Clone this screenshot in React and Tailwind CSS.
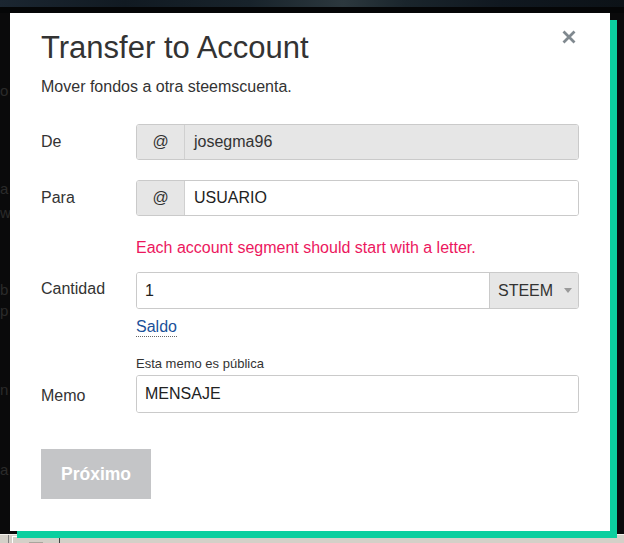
import React from "react";

function Group({ h, children }) {
  return (
    <div className={`flex w-[443px] ${h} rounded-[3px] border border-[#cacaca] overflow-hidden`}>
      {children}
    </div>
  );
}

function Row({ label, labelClass = "", children }) {
  return (
    <div className="flex items-center">
      <div className={`w-[95px] text-[16px] leading-none text-[#333] ${labelClass}`}>{label}</div>
      {children}
    </div>
  );
}

export default function App() {
  return (
    <div className="w-[624px] h-[543px] overflow-hidden bg-[#0a0a0b] flex flex-col font-['Liberation_Sans',Arial,sans-serif]">
      <div className="h-[7px] shrink-0 bg-[linear-gradient(90deg,#1b2631_0%,#111a22_20%,#18232b_40%,#2c383e_55%,#1a252c_65%,#101820_80%,#0c1217_100%)]" />
      <div className="h-[6px] shrink-0 bg-[#050607]" />
      <div className="flex h-[521px] shrink-0">
        <div className="w-[10px] shrink-0 flex flex-col items-start text-[15px] leading-none text-[#2a2a2a] whitespace-nowrap">
          <div className="mt-[70px]">o</div>
          <div className="mt-[83px]">a</div>
          <div className="mt-[9px]">w</div>
          <div className="mt-[62px]">b</div>
          <div className="mt-[6px]">p</div>
          <div className="mt-[64px]">n</div>
          <div className="mt-[65px]">a</div>
        </div>
        <div className="relative w-[600px] h-[518px] shrink-0 bg-white shadow-[7px_7px_0_#0bcf9f] pl-[31px] pr-[31px] pt-[19px] flex flex-col">
          <button className="absolute right-[34px] top-[17px] w-[14px] h-[14px]">
            <svg viewBox="0 0 14 14" width="14" height="14">
              <path d="M1.5 1.5 L12.5 12.5 M12.5 1.5 L1.5 12.5" stroke="#80898f" strokeWidth="2.8" />
            </svg>
          </button>
          <h1 className="text-[31px] leading-none text-[#333] h-[31px]">Transfer to Account</h1>
          <p className="mt-[16px] text-[16px] leading-none text-[#333] h-[16px]">Mover fondos a otra steemscuenta.</p>

          <div className="mt-[29px]">
            <Row label="De">
              <Group h="h-[36px]">
                <span className="w-[48px] flex items-center justify-center bg-[#e6e6e6] border-r border-[#d0d0d0] text-[16px] text-[#333]">@</span>
                <div className="flex-1 flex items-center pl-[9px] bg-[#e6e6e6] text-[16px] text-[#333]">josegma96</div>
              </Group>
            </Row>
          </div>

          <div className="mt-[20px]">
            <Row label="Para">
              <Group h="h-[36px]">
                <span className="w-[48px] flex items-center justify-center bg-[#e6e6e6] border-r border-[#d0d0d0] text-[16px] text-[#333]">@</span>
                <div className="flex-1 flex items-center pl-[9px] bg-white text-[16px] text-[#222]">USUARIO</div>
              </Group>
            </Row>
          </div>

          <p className="mt-[24px] ml-[95px] h-[16px] text-[16px] leading-none text-[#ec175e]">
            Each account segment should start with a letter.
          </p>

          <div className="mt-[16px]">
            <Row label="Cantidad" labelClass="mb-[4px]">
              <Group h="h-[37px]">
                <div className="flex-1 flex items-center pl-2 bg-white text-[16px] text-[#222]">1</div>
                <div className="w-[89px] flex items-center pl-[8px] bg-[#e6e6e6] border-l border-[#cacaca] text-[16px] text-[#333]">
                  <span>STEEM</span>
                  <svg className="ml-[11px]" width="8" height="5" viewBox="0 0 8 5">
                    <path d="M0 0 L8 0 L4 5 Z" fill="#9a9a9a" />
                  </svg>
                </div>
              </Group>
            </Row>
          </div>

          <div className="mt-[10px] ml-[95px] h-[16px] text-[16px] leading-none">
            <span className="text-[#1a5099] border-b border-dotted border-[#666] pb-[1px]">Saldo</span>
          </div>

          <p className="mt-[22px] ml-[95px] h-[13px] text-[13px] leading-none text-[#333]">Esta memo es pública</p>

          <div className="mt-[5px]">
            <Row label="Memo" labelClass="mt-[3px]">
              <Group h="h-[38px]">
                <div className="flex-1 flex items-center pl-2 bg-white text-[16px] text-[#222]">MENSAJE</div>
              </Group>
            </Row>
          </div>

          <button className="mt-[36px] w-[110px] h-[50px] bg-[#c4c5c7] text-white font-bold text-[17.5px] flex items-center justify-center">
            Próximo
          </button>
        </div>
      </div>
      <div className="h-[9px] shrink-0 bg-[#d4d0c8] border-t border-[#f4f2ee] flex">
        <div className="ml-[8px] w-[1px] bg-[#808080]" />
        <div className="ml-[3px] mt-[1px] w-[48px] border-t border-l border-white border-r border-r-[#404040] flex justify-center">
          <div className="mt-[5px] w-[14px] h-[2px] bg-[#a9a59d]" />
        </div>
      </div>
    </div>
  );
}
